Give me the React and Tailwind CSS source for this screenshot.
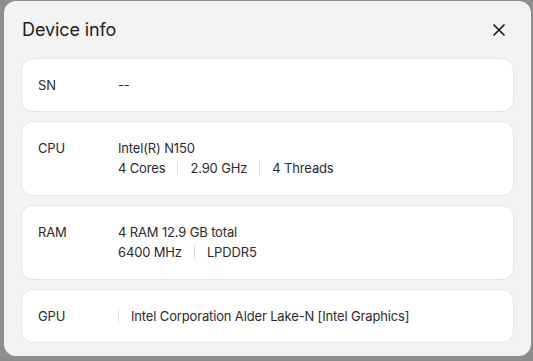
import React from "react";

const Sep = () => <span className="mx-3 inline-block h-[14px] w-px bg-[#dcdcdc]" />;

const Row = ({ label, multi, children }) => (
  <div
    className={`flex rounded-xl border border-[#e6e6e6] bg-white px-4 pt-4 text-[13px] leading-5 tracking-[-0.15px] text-[#2b2b2b] ${
      multi ? "pb-[17px]" : "pb-4"
    }`}
  >
    <div className="w-[80px] shrink-0">{label}</div>
    <div className="flex flex-col">{children}</div>
  </div>
);

const Line = ({ items }) => (
  <div className="flex items-center">
    {items.map((it, i) => (
      <React.Fragment key={i}>
        {i > 0 && <Sep />}
        <span>{it}</span>
      </React.Fragment>
    ))}
  </div>
);

export default function App() {
  return (
    <div
      className="h-[361px] w-[533px] bg-[#8d8d8d] pl-[4px] pt-[1px]"
      style={{ fontFamily: "Inter, 'Liberation Sans', sans-serif" }}
    >
      <div className="flex h-[355px] w-[527px] flex-col rounded-xl bg-[#f3f3f3] px-[17px]">
        <div className="flex h-[57px] items-center justify-between pl-px pr-[8px]">
          <h1 className="text-[18px] font-normal tracking-[-0.1px] text-[#1e1e1e]">Device info</h1>
          <svg width="14" height="14" viewBox="0 0 14 14" fill="none" stroke="#1e1e1e" strokeWidth="1.7" strokeLinecap="round">
            <path d="M2 2L12 12M12 2L2 12" />
          </svg>
        </div>
        <div className="flex flex-col gap-[9px]">
          <Row label="SN">
            <span>--</span>
          </Row>
          <Row label="CPU" multi>
            <span>Intel(R) N150</span>
            <Line items={["4 Cores", "2.90 GHz", "4 Threads"]} />
          </Row>
          <Row label="RAM" multi>
            <span>4 RAM 12.9 GB total</span>
            <Line items={["6400 MHz", "LPDDR5"]} />
          </Row>
          <Row label="GPU">
            <div className="flex items-center">
              <span className="mr-3 inline-block h-[14px] w-px bg-[#dcdcdc]" />
              <span>Intel Corporation Alder Lake-N [Intel Graphics]</span>
            </div>
          </Row>
        </div>
      </div>
    </div>
  );
}
